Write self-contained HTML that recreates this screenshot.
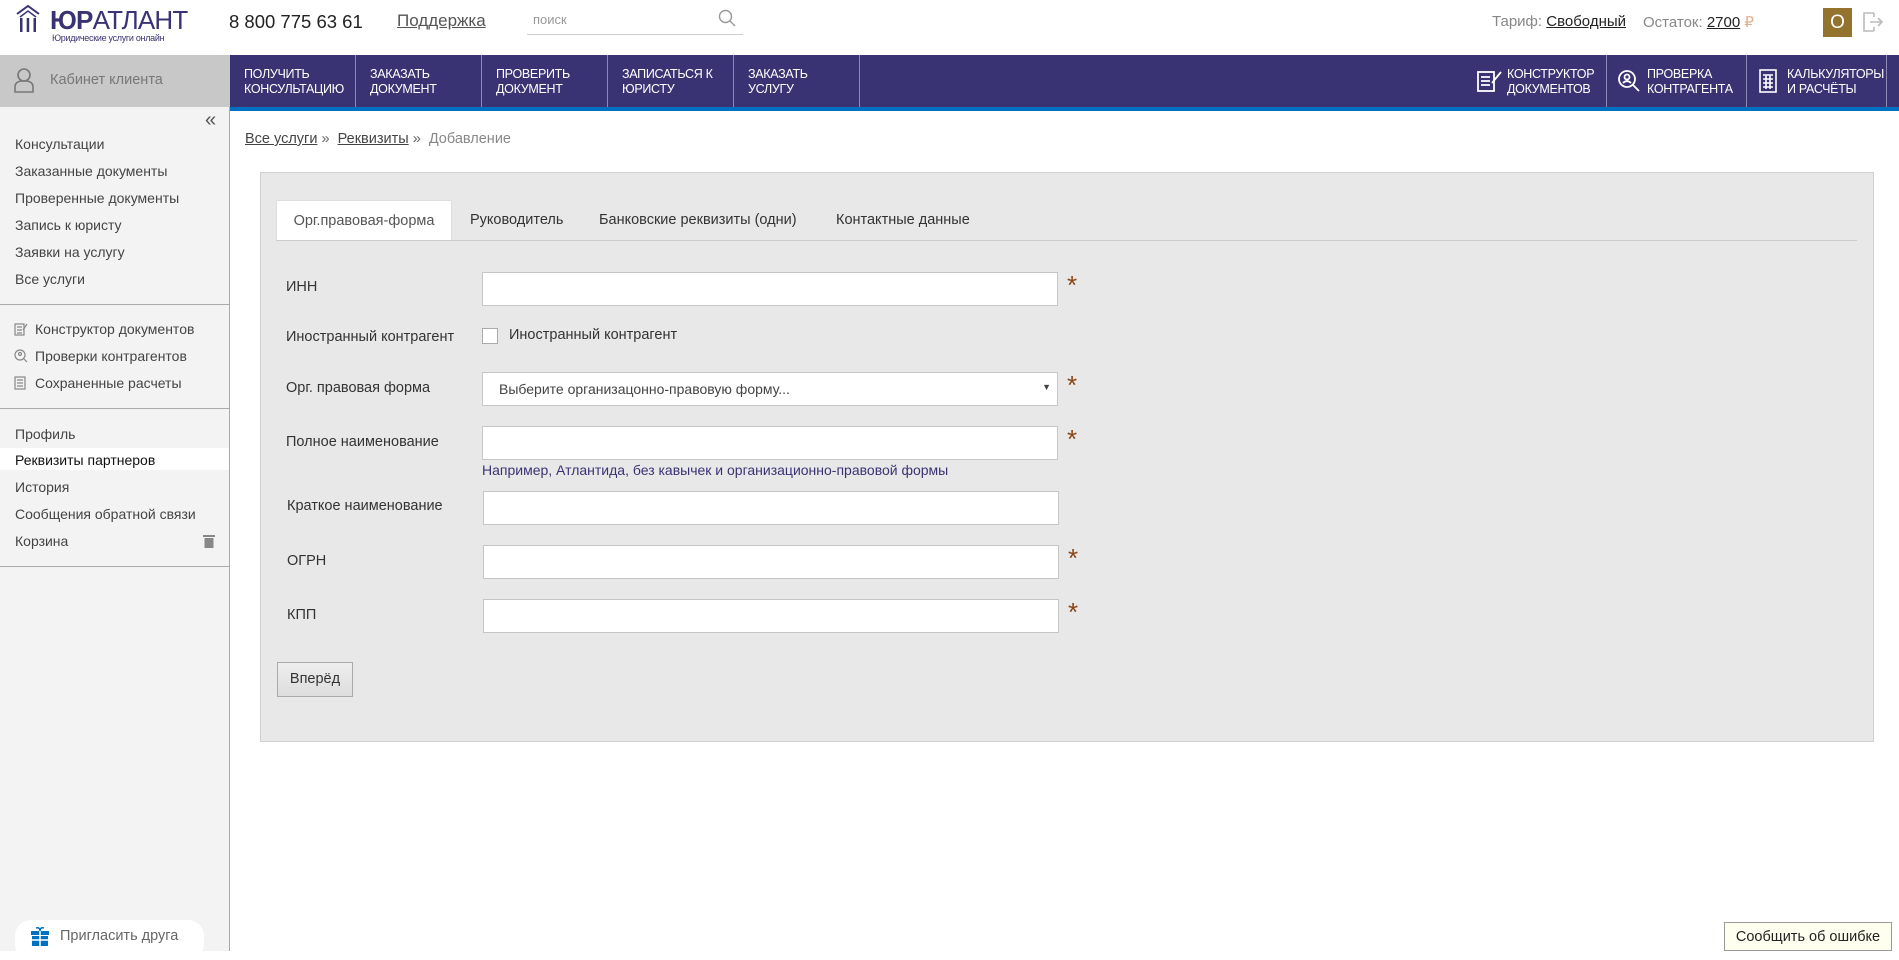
<!DOCTYPE html>
<html><head><meta charset="utf-8"><style>
*{box-sizing:border-box;margin:0;padding:0}
body{width:1899px;height:951px;overflow:hidden;background:#fff;font-family:"Liberation Sans",sans-serif;color:#333;position:relative}
.a{position:absolute}
a{color:#333;text-decoration:underline}
.nav{top:55px;left:230px;right:0;height:52px;background:#3a3373;overflow:hidden}
.ni{position:absolute;top:0;height:52px;border-right:1px solid #8e89b5;color:#fff;font-size:12.5px;line-height:15px;padding:12px 0 0 14px;text-transform:uppercase;letter-spacing:-.3px}
.sb{top:107px;left:0;width:230px;height:844px;background:#f3f3f3;border-right:1px solid #aaa}
.si{position:absolute;left:15px;font-size:14px;color:#444;line-height:18px}
.hr{position:absolute;left:0;width:229px;height:1px;background:#aaa}
.lbl{position:absolute;left:286px;font-size:14.5px;color:#333}
.inp{position:absolute;left:482px;width:576px;height:34px;background:#fff;border:1px solid #c6c6c6}
.ast{position:absolute;left:1067px;color:#8b4513;font-size:26px;line-height:26px}
.tab{position:absolute;top:200px;height:40px;line-height:40px;font-size:14.5px;color:#333}
</style></head><body>
<!-- header -->
<svg class="a" style="left:14px;top:4px" width="28" height="30" viewBox="0 0 28 30"><path d="M3 10 L14 2 L25 10" fill="none" stroke="#3a3373" stroke-width="2"/><path d="M6 13 L14 7 L22 13" fill="none" stroke="#3a3373" stroke-width="1.5"/><rect x="6" y="14" width="2.5" height="14" fill="#3a3373"/><rect x="12.7" y="14" width="2.5" height="14" fill="#3a3373"/><rect x="19.5" y="14" width="2.5" height="14" fill="#3a3373"/></svg>
<div class="a" style="left:50px;top:5px;font-size:26px;color:#3a3373;letter-spacing:-.8px"><b>ЮР</b>АТЛАНТ</div>
<div class="a" style="left:52px;top:33px;font-size:9px;color:#3a3373;letter-spacing:-.3px">Юридические услуги онлайн</div>
<div class="a" style="left:229px;top:11px;font-size:18.5px;color:#222">8 800 775 63 61</div>
<div class="a" style="left:397px;top:11px;font-size:17px;color:#555;text-decoration:underline">Поддержка</div>
<div class="a" style="left:527px;top:34px;width:216px;height:1px;background:#ccc"></div>
<div class="a" style="left:533px;top:12px;font-size:13px;color:#999">поиск</div>
<svg class="a" style="left:718px;top:9px" width="18" height="18" viewBox="0 0 18 18"><circle cx="7.5" cy="7.5" r="6" fill="none" stroke="#999" stroke-width="1.4"/><path d="M12 12 L17 17" stroke="#999" stroke-width="1.4"/></svg>
<div class="a" style="left:1492px;top:13px;font-size:15px;color:#888">Тариф: <a style="color:#222">Свободный</a></div>
<div class="a" style="left:1643px;top:13px;font-size:15px;color:#888">Остаток: <a style="color:#222">2700</a> <span style="color:#e0b090">₽</span></div>
<div class="a" style="left:1823px;top:8px;width:29px;height:29px;background:#94732e;color:#fff;font-size:19px;text-align:center;line-height:29px">О</div>
<svg class="a" style="left:1862px;top:11px" width="22" height="22" viewBox="0 0 22 22" fill="none" stroke="#bbb" stroke-width="1.6"><path d="M12 2 H2 V20 H12 M12 2 V6 M12 20 V16 M8 11 H20 M16 7 L20 11 L16 15"/></svg>
<!-- nav -->
<div class="a" style="left:0;top:55px;width:230px;height:52px;background:#c8c8c8"></div>
<svg class="a" style="left:13px;top:67px" width="22" height="26" viewBox="0 0 22 26" fill="none" stroke="#777" stroke-width="1.6"><circle cx="11" cy="8" r="6"/><path d="M2 25 V20 Q2 15 8 14 H14 Q20 15 20 20 V25 Z"/></svg>
<div class="a" style="left:50px;top:72px;font-size:14.5px;color:#777">Кабинет клиента</div>
<div class="a nav">
<div class="ni" style="left:0;width:126px">Получить<br>консультацию</div>
<div class="ni" style="left:126px;width:126px">Заказать<br>документ</div>
<div class="ni" style="left:252px;width:126px">Проверить<br>документ</div>
<div class="ni" style="left:378px;width:126px">Записаться к<br>юристу</div>
<div class="ni" style="left:504px;width:126px">Заказать<br>услугу</div>
<div class="ni" style="left:1237px;width:140px;padding-left:40px">Конструктор<br>документов</div>
<div class="ni" style="left:1377px;width:140px;padding-left:40px">Проверка<br>контрагента</div>
<div class="ni" style="left:1517px;width:140px;padding-left:40px">Калькуляторы<br>и расчёты</div>
<svg class="a" style="left:1247px;top:14px" width="26" height="24" viewBox="0 0 26 24" fill="none" stroke="#fff" stroke-width="1.8"><rect x="1" y="3" width="16" height="19"/><path d="M4 8h9M4 12h9M4 16h9M15 14 L24 3"/></svg>
<svg class="a" style="left:1387px;top:14px" width="24" height="24" viewBox="0 0 24 24" fill="none" stroke="#fff" stroke-width="1.8"><circle cx="10" cy="10" r="8"/><circle cx="10" cy="8" r="2.5"/><path d="M6 14 Q10 10 14 14 M16 16 L22 22"/></svg>
<svg class="a" style="left:1528px;top:14px" width="20" height="24" viewBox="0 0 20 24" fill="none" stroke="#fff" stroke-width="1.6"><rect x="2" y="1" width="16" height="22"/><path d="M5 6h10M5 10h10M5 14h10M5 18h10M8 6v14M12 6v14"/></svg>
</div>
<div class="a" style="left:230px;top:107px;right:0;height:4px;background:#0070c0"></div>
<!-- sidebar -->
<div class="a sb">
<div class="a" style="left:205px;top:2px;font-size:20px;color:#555">«</div>
<div class="si" style="top:28px">Консультации</div>
<div class="si" style="top:55px">Заказанные документы</div>
<div class="si" style="top:82px">Проверенные документы</div>
<div class="si" style="top:109px">Запись к юристу</div>
<div class="si" style="top:136px">Заявки на услугу</div>
<div class="si" style="top:163px">Все услуги</div>
<div class="hr" style="top:197px"></div>
<div class="si" style="top:213px;left:35px">Конструктор документов</div>
<div class="si" style="top:240px;left:35px">Проверки контрагентов</div>
<div class="si" style="top:267px;left:35px">Сохраненные расчеты</div>
<svg class="a" style="left:14px;top:215px" width="14" height="14" viewBox="0 0 14 14" fill="none" stroke="#888" stroke-width="1.2"><rect x="1" y="2" width="9" height="11"/><path d="M3 5h5M3 8h5M3 11h5M9 8 L13 2"/></svg>
<svg class="a" style="left:14px;top:242px" width="14" height="14" viewBox="0 0 14 14" fill="none" stroke="#888" stroke-width="1.2"><circle cx="6" cy="6" r="5"/><circle cx="6" cy="5" r="1.5"/><path d="M10 10 L13 13"/></svg>
<svg class="a" style="left:14px;top:269px" width="12" height="14" viewBox="0 0 12 14" fill="none" stroke="#888" stroke-width="1.2"><rect x="1" y="1" width="10" height="12"/><path d="M3 4h6M3 7h6M3 10h6"/></svg>
<div class="hr" style="top:301px"></div>
<div class="si" style="top:318px">Профиль</div>
<div class="a" style="left:0;top:341px;width:229px;height:22px;background:#fff"></div>
<div class="si" style="top:344px;color:#111">Реквизиты партнеров</div>
<div class="si" style="top:371px">История</div>
<div class="si" style="top:398px">Сообщения обратной связи</div>
<div class="si" style="top:425px">Корзина</div>
<svg class="a" style="left:203px;top:427px" width="12" height="14" viewBox="0 0 12 14" fill="#888"><rect x="0" y="1" width="12" height="2"/><rect x="1.5" y="4" width="9" height="10"/></svg>
<div class="hr" style="top:459px"></div>
<div class="a" style="left:15px;top:813px;width:189px;height:40px;background:#fff;border-radius:16px"></div>
<svg class="a" style="left:30px;top:819px" width="20" height="20" viewBox="0 0 20 20"><rect x="1" y="5" width="18" height="4" fill="#0070c0"/><rect x="2" y="10" width="16" height="10" fill="#0070c0"/><path d="M6 2 Q10 1 10 5 Q10 1 14 2" fill="none" stroke="#0070c0" stroke-width="1.5"/><path d="M10 5v15M2 14h16" stroke="#fff" stroke-width="1.5"/></svg>
<div class="a" style="left:60px;top:821px;font-size:14.5px;color:#666">Пригласить друга</div>
</div>
<!-- breadcrumb -->
<div class="a" style="left:245px;top:131px;font-size:14.5px;color:#666"><a style="color:#444">Все услуги</a> » &nbsp;<a style="color:#444">Реквизиты</a> » &nbsp;<span style="color:#888">Добавление</span></div>
<!-- panel -->
<div class="a" style="left:260px;top:172px;width:1614px;height:570px;background:#e8e8e8;border:1px solid #d0d0d0"></div>
<div class="a" style="left:276px;top:240px;width:1581px;height:1px;background:#ccc"></div>
<div class="tab" style="left:276px;width:176px;background:#fff;text-align:center;color:#555;border:1px solid #ddd;border-bottom:none">Орг.правовая-форма</div>
<div class="tab" style="left:470px">Руководитель</div>
<div class="tab" style="left:599px">Банковские реквизиты (одни)</div>
<div class="tab" style="left:836px">Контактные данные</div>
<div class="lbl" style="top:279px">ИНН</div><div class="inp" style="top:272px"></div><div class="ast" style="top:272px">*</div>
<div class="lbl" style="top:329px">Иностранный контрагент</div>
<div class="a" style="left:482px;top:328px;width:16px;height:16px;background:#fff;border:1px solid #aaa"></div>
<div class="a" style="left:509px;top:327px;font-size:14.5px">Иностранный контрагент</div>
<div class="lbl" style="top:380px">Орг. правовая форма</div><div class="inp" style="top:372px;padding:8px 0 0 16px;font-size:14px;color:#444">Выберите организацонно-правовую форму...<span style="position:absolute;right:6px;top:9px;font-size:9px">▼</span></div><div class="ast" style="top:372px">*</div>
<div class="lbl" style="top:434px">Полное наименование</div><div class="inp" style="top:426px"></div><div class="ast" style="top:426px">*</div>
<div class="a" style="left:482px;top:462px;font-size:14px;color:#3a3373">Например, Атлантида, без кавычек и организационно-правовой формы</div>
<div class="lbl" style="top:498px;left:287px">Краткое наименование</div><div class="inp" style="top:491px;left:483px"></div>
<div class="lbl" style="top:553px;left:287px">ОГРН</div><div class="inp" style="top:545px;left:483px"></div><div class="ast" style="top:545px;left:1068px">*</div>
<div class="lbl" style="top:607px;left:287px">КПП</div><div class="inp" style="top:599px;left:483px"></div><div class="ast" style="top:599px;left:1068px">*</div>
<div class="a" style="left:277px;top:662px;width:76px;height:35px;background:linear-gradient(#eee,#ddd);border:1px solid #aaa;font-size:14.5px;text-align:center;line-height:33px">Вперёд</div>
<div class="a" style="left:1724px;top:922px;width:168px;height:29px;background:#fffff0;border:1px solid #999;font-size:14.5px;text-align:center;line-height:28px;color:#222">Сообщить об ошибке</div>
</body></html>
